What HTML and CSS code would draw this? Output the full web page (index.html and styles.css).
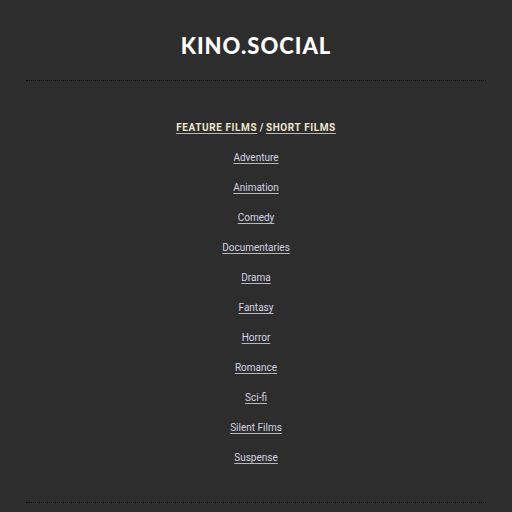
FILE: index.html
```html
<!DOCTYPE html>
<html>
<head>
<meta charset="utf-8">
<link rel="stylesheet" href="styles.css">
</head>
<body>
<div class="page">
  <header class="site-header">
    <h1 class="logo">KINO.SOCIAL</h1>
  </header>
  <main class="content">
    <ul class="genres">
      <li class="tabs"><a href="#" class="tab">Feature Films</a> / <a href="#" class="tab">Short Films</a></li>
      <li><a href="#">Adventure</a></li>
      <li><a href="#">Animation</a></li>
      <li><a href="#">Comedy</a></li>
      <li><a href="#">Documentaries</a></li>
      <li><a href="#">Drama</a></li>
      <li><a href="#">Fantasy</a></li>
      <li><a href="#">Horror</a></li>
      <li><a href="#">Romance</a></li>
      <li><a href="#">Sci-fi</a></li>
      <li><a href="#">Silent Films</a></li>
      <li><a href="#">Suspense</a></li>
    </ul>
  </main>
  <footer class="site-footer"></footer>
</div>
</body>
</html>
```

FILE: styles.css
```css
html, body {
  margin: 0;
  padding: 0;
  background: #2d2d2d;
}
body {
  font-family: Roboto, "Liberation Sans", sans-serif;
  color: #d8d8e0;
}
.page {
  margin: 0 26px;
}
.site-header {
  height: 80px;
  display: flex;
  align-items: center;
  justify-content: center;
  border-bottom: 1px dotted #000;
}
.logo {
  margin: 0;
  font-family: Lato, "Open Sans", sans-serif;
  font-weight: 900;
  font-size: 22px;
  letter-spacing: 1px;
  color: #ffffff;
  padding-top: 10px;
}
.content {
  padding: 32px 0 29px;
}
.genres {
  list-style: none;
  margin: 0;
  padding: 0;
  text-align: center;
}
.genres li {
  height: 30px;
  line-height: 30px;
  font-size: 10px;
}
.genres a {
  color: #d4d4e4;
  text-decoration: underline;
  text-decoration-color: #b8b8b8;
  text-underline-offset: 2px;
}
.genres .tabs {
  font-weight: 700;
  color: #e8e8e8;
}
.genres .tab {
  text-transform: uppercase;
  letter-spacing: 0.6px;
  color: #efe6cc;
}
.site-footer {
  border-top: 1px dotted #000;
  height: 10px;
}
```
